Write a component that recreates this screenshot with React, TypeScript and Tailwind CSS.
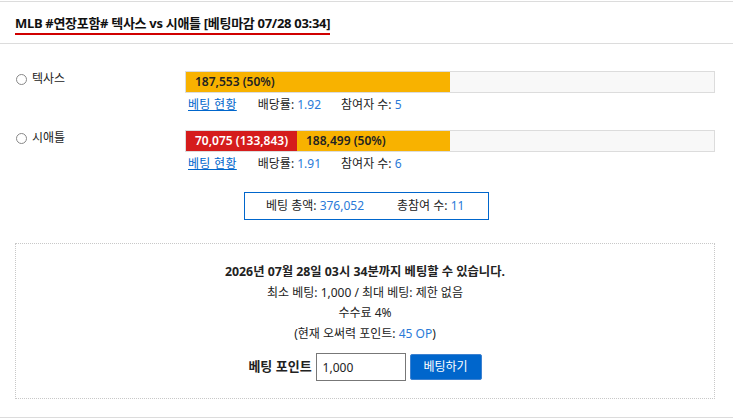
export default function App() {
  const font = { fontFamily: '"Noto Sans", "Noto Sans CJK KR", sans-serif' };
  const teams = [
    { name: "텍사스", odds: "1.92", users: "5", red: null as string | null, redW: 0, orange: "187,553 (50%)" },
    { name: "시애틀", odds: "1.91", users: "6", red: "70,075 (133,843)", redW: 111, orange: "188,499 (50%)" },
  ];

  return (
    <div className="w-[733px] h-[418px] bg-white text-[12px] text-[#222] overflow-hidden" style={font}>
      <div className="mt-px border-t border-[#dcdcdc]" />
      <div className="h-[42px] flex items-center px-[15px] border-b border-[#dcdcdc]">
        <h2 className="text-[13px] font-bold text-[#111] leading-[18px] border-b-2 border-[#d00000] mt-[3px] pb-[1px] tracking-[-0.3px]">
          MLB #연장포함# 텍사스 vs 시애틀 [베팅마감 07/28 03:34]
        </h2>
      </div>

      <div className="pt-[27px] flex flex-col gap-[13px]">
        {teams.map((t) => (
          <div key={t.name} className="flex">
            <label className="w-[185px] pl-[16px] flex items-start gap-[5px] pt-[1px]">
              <span className="mt-[2px] w-[11px] h-[11px] rounded-full border border-[#888] bg-white" />
              <span className="leading-[14px]">{t.name}</span>
            </label>
            <div className="flex flex-col">
              <div className="w-[530px] h-[22px] border border-[#dcdcdc] bg-[#f8f8f8] flex">
                {t.red && (
                  <div className="bg-[#d51c1c] text-white font-semibold flex items-center pl-[9px]" style={{ width: t.redW }}>
                    {t.red}
                  </div>
                )}
                <div
                  className="bg-[#f8b200] text-[#222] font-semibold flex items-center pl-[9px]"
                  style={{ width: 264 - t.redW }}
                >
                  {t.orange}
                </div>
              </div>
              <div className="flex items-center h-[24px] pl-[3px]">
                <a href="#" className="text-[#0066cc] underline tracking-[0.3px]">베팅 현황</a>
                <span className="ml-[21px]">배당률: <span className="text-[#2a7ad8]">{t.odds}</span></span>
                <span className="ml-[20px]">참여자 수: <span className="text-[#2a7ad8]">{t.users}</span></span>
              </div>
            </div>
          </div>
        ))}
      </div>

      <div className="flex justify-center mt-[16px]">
        <div className="w-[245px] h-[28px] border border-[#0066cc] flex items-center pl-[21px] gap-[33px]">
          <span>베팅 총액: <span className="text-[#2a7ad8]">376,052</span></span>
          <span>총참여 수: <span className="text-[#2a7ad8]">11</span></span>
        </div>
      </div>

      <div className="mx-[15px] mt-[23px] w-[700px] h-[156px] border border-dotted border-[#c8c8c8] flex flex-col items-center pt-[18px]">
        <p className="font-bold leading-[20px] text-[12.3px]">2026년 07월 28일 03시 34분까지 베팅할 수 있습니다.</p>
        <p className="leading-[21px]">최소 베팅: 1,000 / 최대 베팅: 제한 없음</p>
        <p className="leading-[20px]">수수료 4%</p>
        <p className="leading-[21px]">(현재 오써력 포인트: <span className="text-[#2a7ad8]">45 OP</span>)</p>
        <div className="flex items-center mt-[9px] gap-[4px]">
          <span className="font-bold text-[13px]">베팅 포인트</span>
          <input
            defaultValue="1,000"
            className="w-[90px] h-[28px] border border-[#777] px-[6px] text-[12px] outline-none"
            style={font}
          />
          <button className="w-[72px] h-[26px] bg-[#0066cc] text-white rounded-[2px] border border-[#3d82d1] text-[12px]">
            베팅하기
          </button>
        </div>
      </div>
      <div className="mt-[18px] border-t border-[#dcdcdc]" />
    </div>
  );
}
